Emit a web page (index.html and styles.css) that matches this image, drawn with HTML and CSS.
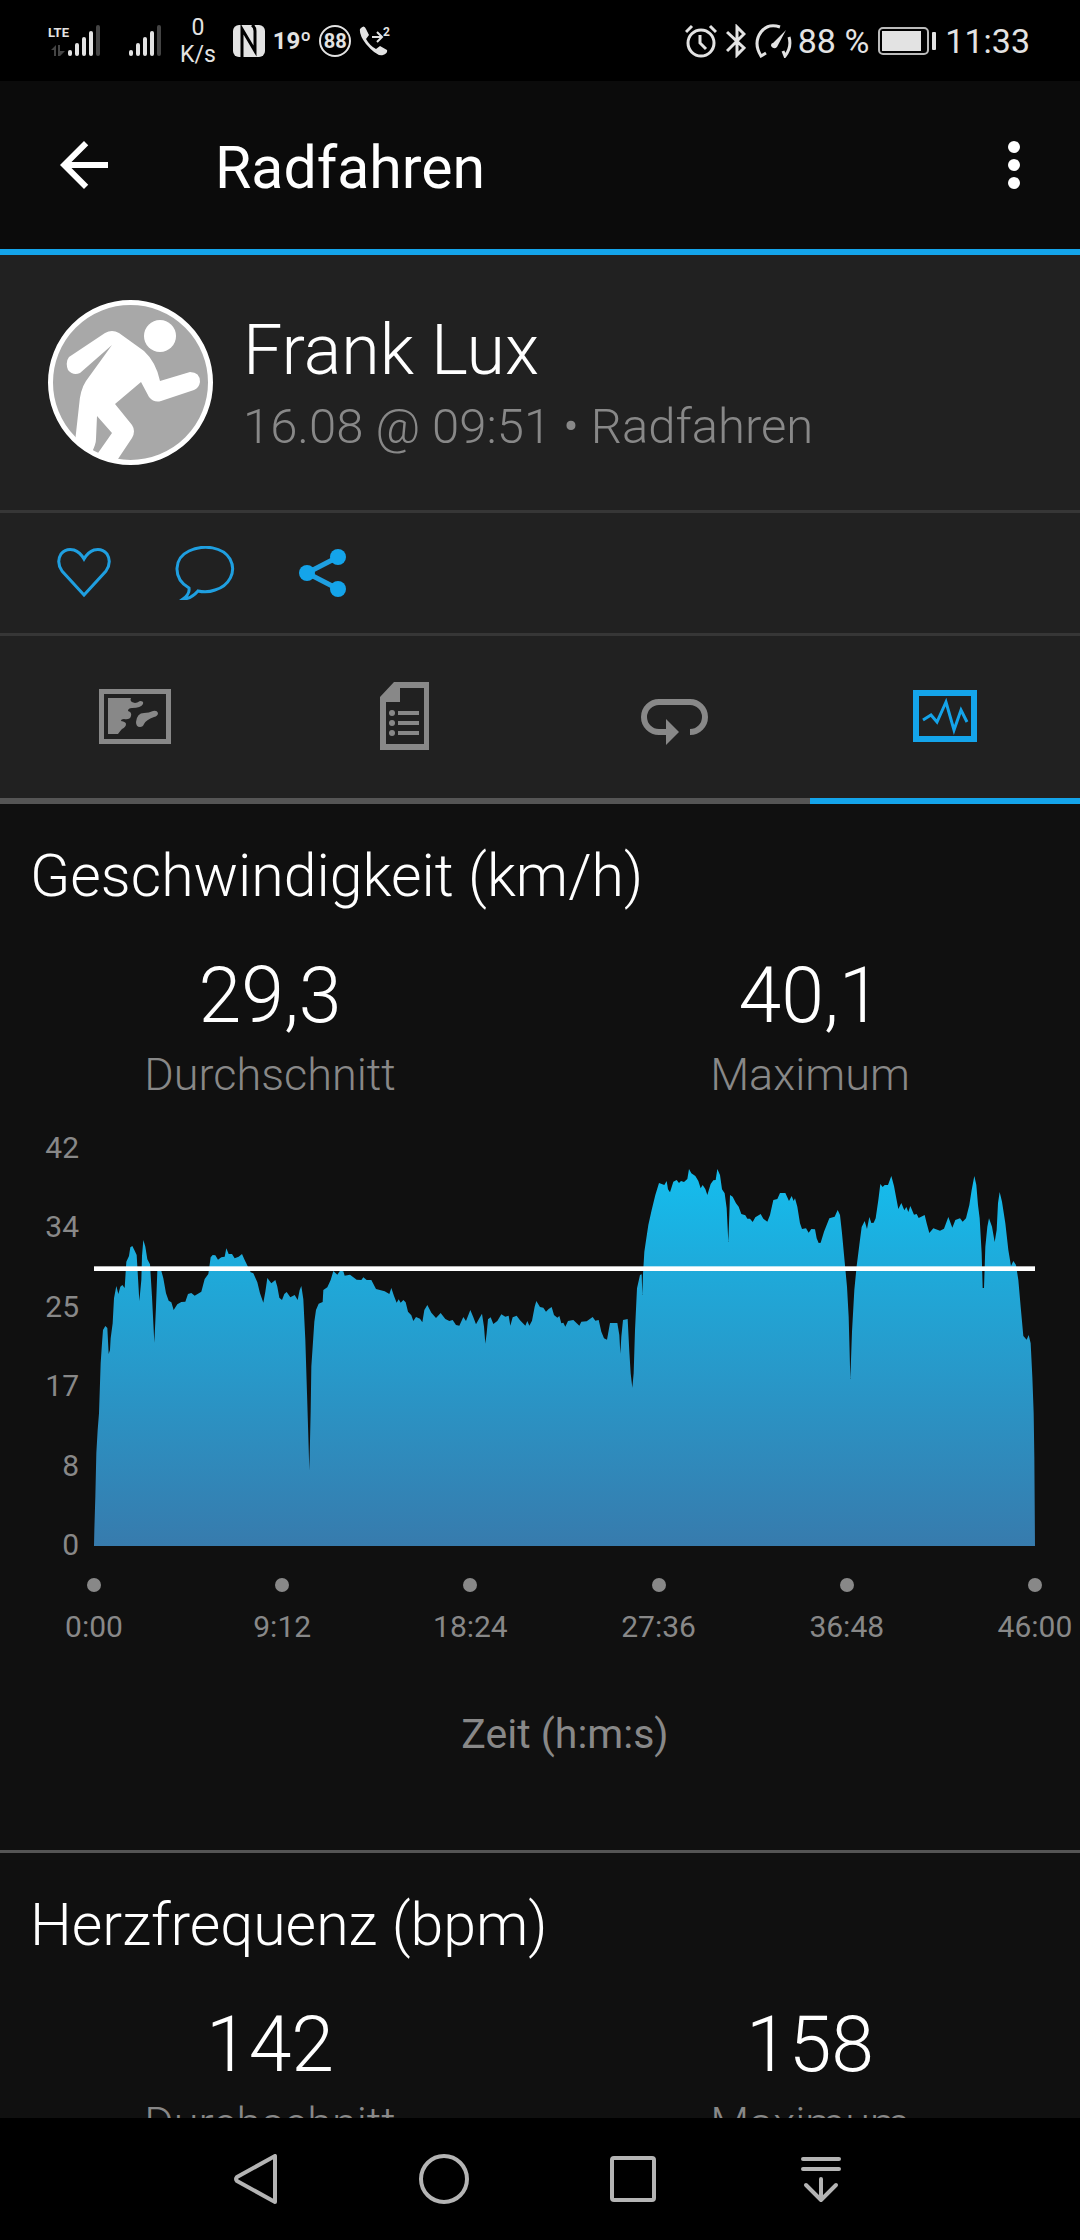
FILE: index.html
```html
<!DOCTYPE html>
<html lang="de">
<head>
  <meta charset="UTF-8" />
  <meta name="viewport" content="width=device-width, initial-scale=1.0" />
  <title>Radfahren</title>
  <link rel="stylesheet" href="styles.css">
</head>
<body>
  <div class="status-bar">
    <div class="status-left">
      <div class="signal">
        <div class="network">
          <span>LTE</span>
          <svg width="14" height="11" viewBox="0 0 14 11" fill="#444"><path d="M0 5l5-5v11H3V5zM7 0h2v6h5l-5 5H7z"/></svg>
        </div>
        <svg width="32" height="31" viewBox="0 0 32 31" fill="#e3e3e3"><rect y="25" width="4" height="6" rx="2"/><rect x="7" y="18" width="4" height="13" rx="2"/><rect x="14" y="12" width="4" height="19" rx="2"/><rect x="21" y="6" width="4" height="25" rx="2"/><rect x="28" width="4" height="31" rx="2" fill="#444"/></svg>
      </div>
      <svg class="signal2" width="32" height="31" viewBox="0 0 32 31" fill="#e3e3e3"><rect y="25" width="4" height="6" rx="2"/><rect x="7" y="18" width="4" height="13" rx="2"/><rect x="14" y="12" width="4" height="19" rx="2"/><rect x="21" y="6" width="4" height="25" rx="2"/><rect x="28" width="4" height="31" rx="2" fill="#444"/></svg>
      <div class="speed">0<br>K/s</div>
      <svg width="32" height="32" viewBox="0 0 32 32"><rect width="32" height="32" rx="6" fill="#e3e3e3"/><path d="M9 32V4l13 22V6q0-4-3-6" fill="none" stroke="#000" stroke-width="3"/></svg>
      <div class="temp">19º</div>
      <div class="badge">88</div>
      <svg width="32" height="32" viewBox="0 0 32 32" fill="none" stroke="#e3e3e3" stroke-width="2"><path d="M1 4q4-5 6 0l3 6-3 4q4 7 10 10l4-3 7 4q1 3-4 5Q18 32 7 19 0 10 1 4z" fill="#e3e3e3" stroke="none"/><path d="M13 12h10M18 7l5 5-5 5"/><text class="call-count" x="24" y="11">2</text></svg>
    </div>
    <div class="status-right">
      <svg width="32" height="34" viewBox="0 0 32 34" fill="none" stroke="#e3e3e3" stroke-width="3"><circle cx="16" cy="19" r="13"/><path d="M15 11v8l6 6M1 8l6-6M31 8l-6-6"/></svg>
      <svg width="20" height="34" viewBox="0 0 20 34" fill="none" stroke="#e3e3e3" stroke-width="3"><path d="M1 8l17 16-7 7V3l7 7L1 27"/></svg>
      <svg class="gauge" width="38" height="34" viewBox="0 0 38 34" fill="none" stroke="#e3e3e3" stroke-width="3"><path d="M25 3Q13-1 6 8-2 19 6 32l5-3M28 27l2 5q7-9 4-19"/><path d="M31 6L22 23q-3 3-6-1 0-3 2-3z" fill="#e3e3e3" stroke="none"/></svg>
      <span>88 %</span>
      <svg class="battery" width="58" height="28" viewBox="0 0 58 28"><rect x="1" y="1" width="49" height="26" rx="4" fill="none" stroke="#bbb" stroke-width="2"/><rect x="4" y="4" width="39" height="20" fill="#e3e3e3"/><rect x="54" y="5" width="4" height="18" rx="1" fill="#e3e3e3"/></svg>
      <span>11:33</span>
    </div>
  </div>

  <header class="app-bar">
    <button class="icon-btn" aria-label="Zurück">
      <svg width="72" height="72" viewBox="0 0 24 24" fill="#fff"><path d="M20 11H7.83l5.59-5.59L12 4l-8 8 8 8 1.41-1.41L7.83 13H20v-2z"/></svg>
    </button>
    <h1>Radfahren</h1>
    <button class="icon-btn" aria-label="Mehr">
      <svg width="72" height="72" viewBox="0 0 24 24" fill="#fff"><circle cx="12" cy="6" r="2"/><circle cx="12" cy="12" r="2"/><circle cx="12" cy="18" r="2"/></svg>
    </button>
  </header>

  <section class="profile">
    <svg class="avatar" width="165" height="165" viewBox="0 0 165 165">
      <defs><clipPath id="face"><circle cx="82.5" cy="82.5" r="80"/></clipPath></defs>
      <circle cx="82.5" cy="82.5" r="80" fill="#a8a8a8"/>
      <g fill="#fff" clip-path="url(#face)">
        <circle cx="112" cy="36" r="16"/>
        <path d="M21 57L57 33q7-4 14 0l25 18q12 11 16 30l30-9q10 0 10 10-1 6-6 8l-33 11q-7 2-12-4l-8-15-26 22 17 21q4 6 0 13l-18 27-24-5 8-7 14-20-15-17-1 23q0 5-4 13l-3 9-15-10 5-45q1-16 7-25l26-36L32 73q-7 3-12-3-3-8 1-13z"/>
      </g>
      <circle cx="82.5" cy="82.5" r="80" fill="none" stroke="#fff" stroke-width="5"/>
    </svg>
    <div class="profile-text">
      <div class="name">Frank Lux</div>
      <div class="meta">16.08 @ 09:51 • Radfahren</div>
    </div>
  </section>

  <div class="actions">
    <button class="icon-btn" aria-label="Gefällt mir">
      <svg width="54" height="54" viewBox="0 0 54 54" fill="none" stroke="#1f9fe0" stroke-width="3"><path d="M27 49L5 25Q-1 16 4 8 9 2 17 4q6 2 10 9 4-7 10-9 8-2 13 4 5 8-1 17z"/></svg>
    </button>
    <button class="icon-btn" aria-label="Kommentieren">
      <svg width="60" height="54" viewBox="0 0 60 54" fill="none" stroke="#1f9fe0" stroke-width="3"><path d="M14 42C-3 32-1 12 14 5 29-2 48 1 55 13c7 13-1 27-15 31q-8 3-17 1-7 8-15 8 7-5 6-11z"/></svg>
    </button>
    <button class="icon-btn" aria-label="Teilen">
      <svg width="48" height="54" viewBox="0 0 48 54" fill="#14a4ea"><path d="M39 11L8 27l31 16" fill="none" stroke="#1f9fe0" stroke-width="5"/><circle cx="8" cy="27" r="8"/><circle cx="39" cy="11" r="8"/><circle cx="39" cy="43" r="8"/></svg>
    </button>
  </div>

  <nav class="tabs">
    <a href="#karte" aria-label="Karte">
      <svg width="72" height="72" viewBox="0 0 72 72" fill="#888"><path d="M0 8h72v55H0zM5 13v45h62V13z" fill-rule="evenodd"/><path d="M9 17h23q-2 4 4 5 2 0 5-2 4 0 3 3-2 4-11 4-4 0-4 3 4 1 3 5-1 4-7 3-3 0-3 2 5 1 5 3 0 3-4 5-2 2-4 5H9z"/><path d="M37 41q1-9 8-9 5 0 9-2 4-1 5 2 0 3-4 4-8 3-10 7-1 3-4 3-4 0-4-5z"/></svg>
    </a>
    <a href="#details" aria-label="Details">
      <svg width="50" height="72" viewBox="0 0 50 72" fill="#888"><path d="M14 1h35v68H0V16zM20 7v14H6v42h38V7z" fill-rule="evenodd"/><circle cx="12" cy="32" r="3"/><circle cx="12" cy="42" r="3"/><circle cx="12" cy="52" r="3"/><path d="M18 30h21v4H18zM18 40h21v4H18zM18 50h21v4H18z"/></svg>
    </a>
    <a href="#runden" aria-label="Runden">
      <svg width="68" height="72" viewBox="0 0 68 72" fill="#888"><path d="M26 51h-8a15 15 0 0 1 0-30h31a15 15 0 0 1 0 30" fill="none" stroke="#888" stroke-width="6"/><path d="M25 38l13 13-13 13z"/></svg>
    </a>
    <a href="#diagramme" class="active" aria-label="Diagramme">
      <svg width="64" height="72" viewBox="0 0 64 72" fill="none" stroke="#14a4ea"><path d="M3 12h58v46H3z" stroke-width="6"/><path d="M10 39l8-5 6 7 9-20 8 28 7-20 6 12" stroke-width="3"/></svg>
    </a>
  </nav>

  <main>
    <section class="panel">
      <h2>Geschwindigkeit (km/h)</h2>
      <div class="stats">
        <div><div class="value">29,3</div><div class="label">Durchschnitt</div></div>
        <div><div class="value">40,1</div><div class="label">Maximum</div></div>
      </div>
      <div class="chart">
        <div class="y-axis"><span>42</span><span>34</span><span>25</span><span>17</span><span>8</span><span>0</span></div>
        <svg class="plot" viewBox="0 0 2823 1191" preserveAspectRatio="none">
          <defs>
            <linearGradient id="speed" x1="0" y1="0" x2="0" y2="1"><stop offset="0" stop-color="#14bdee"/><stop offset=".25" stop-color="#1eabdb"/><stop offset="1" stop-color="#377bad"/></linearGradient>
          </defs>
          <polygon fill="url(#speed)" points="0,1191 1,1143 4,1043 7,913 11,843 15,793 17,733 20,643 24,583 27,543 34,531 40,537 44,615 48,603 50,568 56,523 60,448 67,411 73,435 79,413 85,408 92,417 97,338 105,321 109,295 115,291 121,303 128,318 136,456 142,393 144,321 148,273 154,293 160,331 168,346 174,443 178,523 181,581 186,473 190,366 202,366 208,388 216,433 224,455 232,460 239,483 250,466 262,459 274,458 282,435 292,432 302,440 322,428 332,390 343,375 350,325 356,318 364,319 372,332 382,325 392,323 397,298 404,315 414,315 422,328 434,323 444,315 452,333 464,358 470,370 478,373 490,400 498,433 508,461 514,428 520,387 532,403 544,393 550,413 556,446 564,453 571,435 578,429 589,445 602,438 611,453 617,423 622,411 628,451 634,573 639,733 643,863 646,965 650,788 652,653 656,593 661,518 666,483 674,464 686,459 688,423 700,415 710,393 718,366 730,377 738,365 748,367 752,380 768,377 788,392 802,393 808,385 818,393 832,393 846,420 872,427 886,435 892,417 900,441 908,461 914,451 920,461 928,453 935,460 942,488 952,499 958,516 966,504 978,509 985,520 991,483 1000,468 1012,491 1026,507 1040,492 1054,510 1066,516 1076,513 1086,528 1096,530 1108,504 1116,516 1129,483 1138,505 1146,526 1156,508 1164,494 1170,533 1174,584 1178,553 1182,511 1190,505 1198,525 1210,516 1222,496 1234,503 1244,500 1249,530 1256,505 1268,500 1278,514 1294,530 1300,516 1306,530 1314,515 1322,473 1327,456 1338,474 1348,476 1356,488 1364,480 1373,474 1380,498 1390,506 1396,501 1402,523 1408,521 1414,533 1422,516 1438,513 1456,530 1462,518 1478,517 1496,504 1504,515 1514,513 1522,548 1530,568 1539,572 1548,522 1570,522 1576,558 1579,614 1582,563 1587,513 1601,510 1606,608 1610,673 1615,716 1619,673 1623,543 1629,418 1638,378 1643,376 1645,438 1647,376 1651,308 1657,268 1663,228 1673,183 1684,138 1695,102 1711,108 1718,96 1722,121 1728,130 1738,98 1748,93 1755,102 1761,96 1770,99 1780,90 1785,60 1792,73 1804,81 1813,96 1820,118 1826,108 1834,120 1840,138 1850,105 1858,94 1865,93 1870,60 1878,78 1884,121 1892,133 1898,178 1903,279 1908,138 1916,143 1926,163 1934,173 1942,195 1954,199 1960,209 1968,209 1976,219 1984,205 2000,195 2008,209 2020,218 2028,198 2038,153 2050,150 2058,132 2074,132 2085,156 2093,141 2099,156 2103,148 2110,173 2118,223 2124,240 2136,238 2144,251 2152,240 2163,241 2168,268 2174,282 2180,281 2190,248 2206,208 2222,203 2231,183 2238,198 2244,253 2251,328 2259,413 2264,503 2269,690 2274,548 2281,423 2288,351 2296,288 2303,234 2312,216 2319,240 2326,204 2332,222 2339,221 2345,208 2353,153 2359,105 2366,114 2372,108 2382,108 2392,81 2400,111 2406,143 2413,180 2422,162 2431,184 2437,174 2443,189 2449,171 2460,197 2468,195 2474,207 2492,198 2498,223 2506,252 2518,238 2538,245 2550,239 2563,204 2575,236 2584,213 2598,208 2606,218 2616,208 2626,168 2633,123 2641,81 2647,108 2652,168 2657,208 2663,313 2666,417 2670,417 2674,293 2680,233 2685,208 2694,233 2702,279 2708,243 2712,163 2717,129 2724,158 2734,223 2743,303 2751,351 2758,336 2766,348 2773,393 2780,473 2788,561 2798,572 2804,558 2810,583 2815,683 2819,793 2821,923 2823,1191"/>
          <rect y="352" width="2823" height="14" fill="#fff"/>
        </svg>
      </div>
      <div class="x-axis"><span>0:00</span><span>9:12</span><span>18:24</span><span>27:36</span><span>36:48</span><span>46:00</span></div>
      <div class="axis-title">Zeit (h:m:s)</div>
    </section>

    <section class="panel">
      <h2>Herzfrequenz (bpm)</h2>
      <div class="stats">
        <div><div class="value">142</div><div class="label">Durchschnitt</div></div>
        <div><div class="value">158</div><div class="label">Maximum</div></div>
      </div>
    </section>
  </main>

  <div class="nav-bar">
    <button class="icon-btn" aria-label="Zurück">
      <svg width="50" height="50" viewBox="0 0 50 50"><path d="M44 2v46L6 27q-2-2 0-4z"/></svg>
    </button>
    <button class="icon-btn" aria-label="Startseite">
      <svg width="50" height="50" viewBox="0 0 50 50"><circle cx="25" cy="25" r="23"/></svg>
    </button>
    <button class="icon-btn" aria-label="Übersicht">
      <svg width="50" height="50" viewBox="0 0 50 50"><rect x="4" y="4" width="42" height="42" rx="2"/></svg>
    </button>
    <button class="icon-btn" aria-label="Benachrichtigungen">
      <svg width="50" height="50" viewBox="0 0 50 50"><path d="M7 5h36M7 15h36M25 25v20M10 31l15 15 15-15"/></svg>
    </button>
  </div>
</body>
</html>
```
FILE: styles.css
```css
* {
  box-sizing: border-box;
}

body {
  margin: 0;
  height: 100vh;
  display: flex;
  flex-direction: column;
  font-family: Roboto, sans-serif;
  background: #101010;
  color: #fff;
  overflow: hidden;
}

svg {
  display: block;
  flex: none;
}

h1, h2 {
  margin: 0;
}

.icon-btn {
  padding: 0;
  border: none;
  background: none;
  cursor: pointer;
}

/* status bar */
.status-bar {
  flex: none;
  height: 81px;
  padding: 0 50px 0 48px;
  display: flex;
  justify-content: space-between;
  align-items: center;
  background: #000;
  color: #e3e3e3;
}

.status-left, .status-right {
  display: flex;
  align-items: center;
  gap: 8px;
}

.signal {
  display: flex;
}

.network {
  width: 20px;
  font-size: 13px;
  font-weight: bold;
  line-height: 16px;
}

.network svg {
  margin: 4px 0 0 3px;
}

.signal2 {
  margin-left: 21px;
}

.speed {
  margin: 0 9px 0 11px;
  font-size: 23px;
  line-height: 27px;
  text-align: center;
}

.temp {
  font-size: 24px;
  font-weight: bold;
}

.badge {
  width: 32px;
  height: 32px;
  border: 2px solid #e3e3e3;
  border-radius: 50%;
  font-size: 20px;
  font-weight: bold;
  line-height: 28px;
  display: flex;
  justify-content: center;
}

.call-count {
  fill: #e3e3e3;
  stroke: none;
  font-size: 12px;
  font-weight: bold;
}

.status-right {
  gap: 9px;
  font-size: 34px;
}

.gauge {
  margin-right: -4px;
}

/* app bar */
.app-bar {
  flex: none;
  height: 174px;
  padding: 0 30px 0 48px;
  display: flex;
  align-items: center;
  background: #0b0b0b;
  border-bottom: 6px solid #14a4ea;
}

.app-bar h1 {
  flex: 1;
  margin-left: 95px;
  padding-top: 4px;
  font-size: 59px;
  font-weight: 400;
}

/* profile */
.profile {
  flex: none;
  height: 258px;
  padding: 0 48px;
  display: flex;
  align-items: center;
  gap: 30px;
  background: #212121;
  border-bottom: 3px solid #363636;
  font-weight: 300;
}

.profile-text {
  padding-top: 6px;
}

.name {
  font-size: 70px;
  line-height: 82px;
}

.meta {
  font-size: 49px;
  line-height: 72px;
  color: #888;
}

.actions {
  flex: none;
  height: 123px;
  padding: 0 57px;
  display: flex;
  align-items: center;
  gap: 64px;
  background: #212121;
  border-bottom: 3px solid #363636;
}

/* tabs */
.tabs {
  flex: none;
  height: 168px;
  display: grid;
  grid-template-columns: repeat(4, 1fr);
  background: #212121;
}

.tabs a {
  display: flex;
  align-items: center;
  justify-content: center;
  border-bottom: 6px solid #555;
}

.tabs a.active {
  border-bottom-color: #14a4ea;
}

/* diagrams */
main {
  flex: 1;
  min-height: 0;
  overflow: hidden;
}

.panel {
  padding-top: 37px;
  border-bottom: 3px solid #555;
}

.panel h2 {
  padding-left: 30px;
  font-size: 59px;
  line-height: 70px;
  font-weight: 300;
}

.stats {
  margin-top: 39px;
  display: grid;
  grid-template-columns: 1fr 1fr;
  text-align: center;
  font-weight: 300;
}

.value {
  font-size: 77px;
  line-height: 92px;
}

.label {
  margin-top: 6px;
  font-size: 45px;
  line-height: 54px;
  color: #888;
}

.chart {
  margin-top: 47px;
  padding-right: 45px;
  display: flex;
}

.y-axis {
  width: 94px;
  margin: -19px 0 -17px;
  padding-right: 15px;
  display: flex;
  flex-direction: column;
  justify-content: space-between;
  text-align: right;
  font-size: 30px;
  line-height: 36px;
  color: #888;
}

.plot {
  flex: 1;
  min-width: 0;
  height: 397px;
}

.x-axis {
  margin: 32px -5px 0 44px;
  display: flex;
  justify-content: space-between;
  font-size: 30px;
  line-height: 36px;
  color: #888;
}

.x-axis span {
  width: 100px;
  text-align: center;
}

.x-axis span::before {
  content: "";
  display: block;
  width: 14px;
  height: 14px;
  margin: 0 auto 17px;
  border-radius: 50%;
  background: #888;
}

.axis-title {
  margin: 64px 0 91px 50px;
  font-size: 41px;
  line-height: 50px;
  text-align: center;
  color: #888;
}

/* navigation bar */
.nav-bar {
  flex: none;
  height: 122px;
  padding: 0 234px 0 231px;
  display: flex;
  align-items: center;
  justify-content: space-between;
  background: #000;
}

.nav-bar svg {
  fill: none;
  stroke: #b4b4b4;
  stroke-width: 4;
  stroke-linejoin: round;
  stroke-linecap: round;
}
```
